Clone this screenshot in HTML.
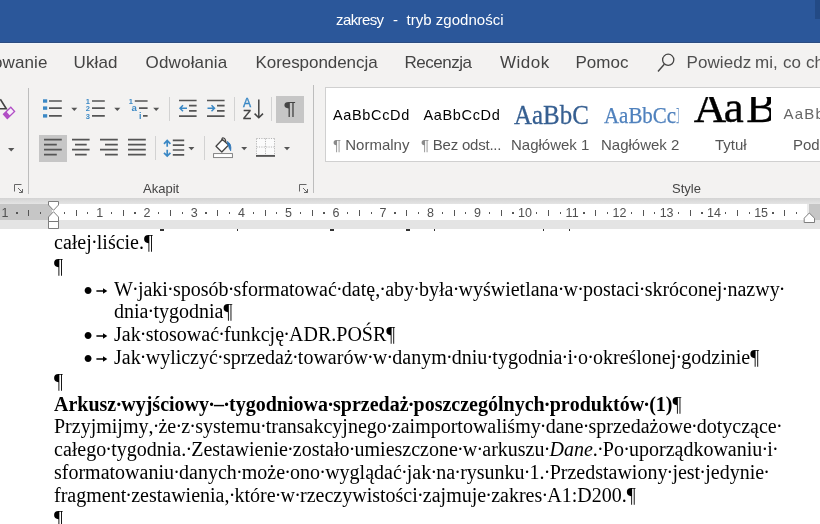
<!DOCTYPE html>
<html lang="pl">
<head>
<meta charset="utf-8">
<title>zakresy - tryb zgodności</title>
<style>
html,body{margin:0;padding:0;}
body{width:820px;height:524px;overflow:hidden;position:relative;background:#fff;font-family:"Liberation Sans",sans-serif;}
#wrap{position:absolute;left:0;top:0;width:820px;height:524px;overflow:hidden;will-change:transform;}
.abs{position:absolute;white-space:nowrap;}
svg.abs{overflow:visible}
#title{left:0;top:0;width:820px;height:42px;background:#2b579a;border-bottom:1px solid #2c4c80;}
#title .t{color:#fff;font-size:15px;top:10.6px;line-height:18px;}
#ribbon{left:0;top:43px;width:820px;height:155px;background:#f3f2f1;border-top:1px solid #f1f6fc;box-sizing:border-box}
.tab{color:#444;font-size:17px;line-height:20px;top:53px;}
#band{left:0;top:198px;width:820px;height:31px;background:linear-gradient(#d3d3d3,#e4e4e4 6px);}
#ruler{left:0;top:204px;width:820px;height:16px;background:#fff;}
.rdark{top:204px;height:16px;background:#c6c6c6;}
.rn{font-size:12.5px;color:#505050;top:206px;line-height:14px;transform:translateX(-50%);}
.doc{font-family:"Liberation Serif",serif;font-size:20px;line-height:23px;color:#000;font-kerning:none;}
.doc s{text-decoration:none;margin:0 var(--m);}
.doc b{font-weight:inherit;}
.bul{font-family:"Liberation Serif",serif;font-size:29px;line-height:30px;color:#000;}
.grp{font-size:13px;color:#444;line-height:16px;top:181px;}
.sname{font-size:15px;color:#555;line-height:18px;top:136px;}
.sprev{font-size:14.5px;color:#000;line-height:18px;top:106px;letter-spacing:0.65px}
.pil{color:#8a8a8a}
.vsep{width:1px;background:#c8c8c8;}
</style>
</head>
<body>
<div id="wrap">
<div id="title" class="abs"><div class="abs t" style="left:336px;letter-spacing:-0.6px">zakresy</div><div class="abs t" style="left:393px">-</div><div class="abs t" style="left:406.5px;letter-spacing:0.03px">tryb zgodności</div></div>
<div class="abs" style="left:815px;top:0;width:5px;height:19px;background:#234a85"></div>
<div id="ribbon" class="abs"></div>
<div class="abs tab" style="left:-7px;letter-spacing:0.1px">owanie</div>
<div class="abs tab" style="left:73.5px;letter-spacing:0.12px">Układ</div>
<div class="abs tab" style="left:145.5px;letter-spacing:0.18px">Odwołania</div>
<div class="abs tab" style="left:255.5px;letter-spacing:-0.06px">Korespondencja</div>
<div class="abs tab" style="left:404.5px;letter-spacing:-0.5px">Recenzja</div>
<div class="abs tab" style="left:500px;letter-spacing:0.5px">Widok</div>
<div class="abs tab" style="left:575.5px;letter-spacing:0px">Pomoc</div>
<svg class="abs" style="left:655px;top:50px" width="24" height="24" viewBox="0 0 24 24"><circle cx="13.2" cy="9.8" r="5.6" fill="none" stroke="#444" stroke-width="1.3"/><path d="M9.3 14.2L3 21.5" stroke="#444" stroke-width="1.4" fill="none"/></svg>
<div class="abs tab" style="left:686.5px;width:140px;height:20px;color:#505050"><span class="abs" style="left:0;letter-spacing:0.1px">Powiedz</span> <span class="abs" style="left:68.5px">mi,</span> <span class="abs" style="left:96.5px">co</span> <span class="abs" style="left:119.5px">chcesz</span></div>

<div class="abs" style="left:39px;top:135px;width:28px;height:27px;background:#c6c6c6"></div>
<div class="abs" style="left:276px;top:96px;width:28px;height:27px;background:#c6c6c6"></div>
<div class="abs vsep" style="left:28px;top:88px;height:106px;background:#bdbdbd"></div>
<div class="abs vsep" style="left:313px;top:85px;height:108px;background:#bdbdbd"></div>
<div class="abs vsep" style="left:169px;top:97px;height:24px;background:#d2d2d2"></div>
<div class="abs vsep" style="left:234px;top:97px;height:24px;background:#d2d2d2"></div>
<div class="abs vsep" style="left:271px;top:97px;height:24px;background:#d2d2d2"></div>
<div class="abs vsep" style="left:155px;top:136px;height:24px;background:#d2d2d2"></div>
<div class="abs vsep" style="left:204px;top:136px;height:24px;background:#d2d2d2"></div>
<svg class="abs" style="left:0;top:86px" width="330" height="112" viewBox="0 86 330 112">
<!-- clear formatting fragment -->
<path d="M0.3 99.2L6.3 108.8H-1" fill="none" stroke="#444" stroke-width="1.6"/>
<path d="M3.5 114.3L10.8 107.3L14.6 111.5L7.3 118.5Z" fill="#f7eefa" stroke="#b14fc5" stroke-width="1.3"/>
<path d="M3.5 114.3L6.3 111.6L10.1 115.8L7.3 118.5Z" fill="#b14fc5"/>
<!-- dropdown arrows -->
<g fill="#555">
<path d="M8 148H14.4L11.2 151.4Z"/>
<path d="M71.3 107.8H77.3L74.3 111Z"/>
<path d="M114.3 107.8H120.3L117.3 111Z"/>
<path d="M153.2 107.8H159.2L156.2 111Z"/>
<path d="M188.4 147H194.4L191.4 150.2Z"/>
<path d="M241.2 147H247.2L244.2 150.2Z"/>
<path d="M284 147H290L287 150.2Z"/>
</g>
<!-- bullets list -->
<g fill="#3a88c5"><rect x="43" y="99.3" width="4.2" height="3.4"/><rect x="43" y="106.4" width="4.2" height="3.4"/><rect x="43" y="114.2" width="4.2" height="3.4"/></g>
<g stroke="#555" stroke-width="1.7" fill="none">
<path d="M49 101H61.8M49 108.1H61.8M49 115.9H61.8"/>
<!-- numbered -->
<path d="M92 101H104.8M92 108.1H104.8M92 115.9H104.8"/>
<!-- multilevel -->
<path d="M134.8 101H147.6M139 108.1H147.6M143 115.9H147.6"/>
<!-- align left -->
<path d="M44 139.6H61.8M44 144.6H56.8M44 149.7H61.8M44 154.7H56.8"/>
<!-- center -->
<path d="M72 139.6H89.6M75 144.6H86.7M72 149.7H89.6M75 154.7H86.7"/>
<!-- right -->
<path d="M100 139.6H117.8M105 144.6H117.8M100 149.7H117.8M105 154.7H117.8"/>
<!-- justify -->
<path d="M128 139.6H145.8M128 144.6H145.8M128 149.7H145.8M128 154.7H145.8"/>
<!-- line spacing lines -->
<path d="M172.8 140.3H184.2M172.8 145.1H184.2M172.8 150H184.2M172.8 154.8H184.2"/>
<!-- decrease indent -->
<path d="M179 100.5H196.6M189 105.7H196.6M189 110.9H196.6M179 116.1H196.6"/>
<!-- increase indent -->
<path d="M207 100.5H224.6M217 105.7H224.6M217 110.9H224.6M207 116.1H224.6"/>
</g>
<g stroke="#3a88c5" stroke-width="1.5" fill="none">
<path d="M180 108.3H187M183 105.3L180 108.3L183 111.3"/>
<path d="M207.5 108.3H214.5M211.5 105.3L214.5 108.3L211.5 111.3"/>
<path d="M167.2 140.8V146.8M167.2 149.8V155.8M164 143.8L167.2 140.5L170.4 143.8M164 152.8L167.2 156.1L170.4 152.8" stroke-width="1.7"/>
</g>
<g font-family="Liberation Sans, sans-serif" font-weight="bold" fill="#3a88c5" font-size="7.5">
<text x="85.8" y="103.6">1</text><text x="85.8" y="111">2</text><text x="85.8" y="118.6">3</text>
<text x="128.8" y="103.6">1</text><text x="131.6" y="111.4" font-size="9.6">a</text><text x="139" y="119" font-size="9">i</text>
</g>
<!-- AZ sort -->
<text x="243" y="107.4" font-family="Liberation Sans, sans-serif" font-size="12.2" fill="#3a88c5" stroke="#3a88c5" stroke-width="0.35">A</text>
<text x="243" y="118.5" font-family="Liberation Sans, sans-serif" font-size="12.2" fill="#444" stroke="#444" stroke-width="0.35" textLength="8.2" lengthAdjust="spacingAndGlyphs">Z</text>
<path d="M258.8 99.5V117.6M254.6 113.6L258.8 117.8L263 113.6" stroke="#444" stroke-width="1.5" fill="none"/>
<!-- pilcrow -->
<text transform="translate(283.4,114.6) scale(1.38,1.1)" font-family="Liberation Sans, sans-serif" font-size="17" fill="#444">¶</text>
<!-- paint bucket -->
<path d="M216 146.2L222.4 139.5L228.6 145L221.8 152Z" fill="#fff" stroke="#444" stroke-width="1.3" stroke-linejoin="round"/>
<path d="M222.2 141Q221.2 137.4 223.6 138Q225.6 138.6 225.8 142" fill="none" stroke="#444" stroke-width="1.2"/>
<path d="M227.2 141.4Q231.8 143.6 230.7 150.8Q228.9 148.6 228.5 145.2Z" fill="#2e75b6" stroke="#2e75b6" stroke-width="0.8"/>
<circle cx="228.8" cy="144.2" r="1.3" fill="#2e75b6"/>
<rect x="213.6" y="153.6" width="18.8" height="4" fill="#fff" stroke="#777" stroke-width="0.9"/>
<!-- borders -->
<rect x="256" y="138" width="19" height="17" fill="#fbfbfb"/>
<g stroke="#b5b5b5" stroke-width="1" stroke-dasharray="1.2 1.2" fill="none">
<path d="M256.5 138.5H274.5M256.5 138.5V155M274.5 138.5V155M265.5 138.5V155M256.5 147H274.5"/>
</g>
<path d="M256 155.9H275" stroke="#555" stroke-width="1.9"/>
<!-- dialog launchers -->
<g stroke="#666" stroke-width="1" fill="none">
<path d="M14.5 191.5V184.5H21.5M18 188L22.5 192.5M22.5 189V192.5H19"/>
<path d="M299.5 191.5V184.5H306.5M303 188L307.5 192.5M307.5 189V192.5H304"/>
</g>
</svg>


<div class="abs grp" style="left:143px">Akapit</div>
<div class="abs grp" style="left:672px">Style</div>

<div id="gallery" class="abs" style="left:325px;top:87px;width:500px;height:75px;background:#fff;border:1px solid #d0d0d0;box-sizing:border-box;"></div>
<div class="abs sprev" style="left:333px">AaBbCcDd</div>
<div class="abs sname" style="left:333px"><span class="pil">¶</span> Normalny</div>
<div class="abs sprev" style="left:423.5px">AaBbCcDd</div>
<div class="abs sname" style="left:421px;letter-spacing:-0.22px"><span class="pil">¶</span> Bez odst...</div>
<div class="abs" style="left:514px;top:98px;font-family:'Liberation Serif',serif;font-size:28px;line-height:34px;color:#365f91;transform:scaleX(0.89);transform-origin:0 0;-webkit-text-stroke:0.3px #365f91">AaBbC</div>
<div class="abs sname" style="left:511px">Nagłówek 1</div>
<div class="abs" style="left:603.5px;top:100.5px;width:81.5px;overflow:hidden;font-family:'Liberation Serif',serif;font-size:23px;line-height:30px;color:#4f81bd;transform:scaleX(0.91);transform-origin:0 0;-webkit-text-stroke:0.25px #4f81bd">AaBbCcDd</div>
<div class="abs sname" style="left:601px">Nagłówek 2</div>
<div class="abs" style="left:690px;top:97px;width:81px;height:32px;overflow:hidden"><div class="abs" style="left:3.7px;top:-16px;font-family:'Liberation Serif',serif;font-size:45px;line-height:52px;color:#000;-webkit-text-stroke:0.4px #000"><span style="letter-spacing:-2.5px">A</span><span style="letter-spacing:2.5px">a</span>B</div></div>
<div class="abs sname" style="left:715px">Tytuł</div>
<div class="abs" style="left:783.5px;top:105px;font-size:15px;line-height:18px;color:#666;letter-spacing:1.2px">AaBbCcD</div>
<div class="abs sname" style="left:793px">Podtytuł</div>

<div id="band" class="abs"></div>
<div id="ruler" class="abs"></div>
<div class="abs rdark" style="left:0;width:52px"></div>
<div class="abs rdark" style="left:809px;width:11px"></div><div class="abs" style="left:807px;top:204px;width:2px;height:16px;background:#ebebeb"></div>
<div class="abs rn" style="left:5.1px">1</div><div class="abs" style="left:16.3px;top:212px;width:1.4px;height:2px;background:#555"></div><div class="abs" style="left:28.3px;top:210px;width:1px;height:6px;background:#555"></div><div class="abs" style="left:39.9px;top:212px;width:1.4px;height:2px;background:#555"></div><div class="abs" style="left:63.5px;top:212px;width:1.4px;height:2px;background:#555"></div><div class="abs" style="left:75.5px;top:210px;width:1px;height:6px;background:#555"></div><div class="abs" style="left:87.1px;top:212px;width:1.4px;height:2px;background:#555"></div><div class="abs rn" style="left:99.7px">1</div><div class="abs" style="left:110.8px;top:212px;width:1.4px;height:2px;background:#555"></div><div class="abs" style="left:122.8px;top:210px;width:1px;height:6px;background:#555"></div><div class="abs" style="left:134.4px;top:212px;width:1.4px;height:2px;background:#555"></div><div class="abs rn" style="left:146.9px">2</div><div class="abs" style="left:158.0px;top:212px;width:1.4px;height:2px;background:#555"></div><div class="abs" style="left:170.0px;top:210px;width:1px;height:6px;background:#555"></div><div class="abs" style="left:181.6px;top:212px;width:1.4px;height:2px;background:#555"></div><div class="abs rn" style="left:194.2px">3</div><div class="abs" style="left:205.3px;top:212px;width:1.4px;height:2px;background:#555"></div><div class="abs" style="left:217.3px;top:210px;width:1px;height:6px;background:#555"></div><div class="abs" style="left:228.9px;top:212px;width:1.4px;height:2px;background:#555"></div><div class="abs rn" style="left:241.4px">4</div><div class="abs" style="left:252.5px;top:212px;width:1.4px;height:2px;background:#555"></div><div class="abs" style="left:264.5px;top:210px;width:1px;height:6px;background:#555"></div><div class="abs" style="left:276.1px;top:212px;width:1.4px;height:2px;background:#555"></div><div class="abs rn" style="left:288.6px">5</div><div class="abs" style="left:299.8px;top:212px;width:1.4px;height:2px;background:#555"></div><div class="abs" style="left:311.8px;top:210px;width:1px;height:6px;background:#555"></div><div class="abs" style="left:323.4px;top:212px;width:1.4px;height:2px;background:#555"></div><div class="abs rn" style="left:335.9px">6</div><div class="abs" style="left:347.0px;top:212px;width:1.4px;height:2px;background:#555"></div><div class="abs" style="left:359.0px;top:210px;width:1px;height:6px;background:#555"></div><div class="abs" style="left:370.6px;top:212px;width:1.4px;height:2px;background:#555"></div><div class="abs rn" style="left:383.1px">7</div><div class="abs" style="left:394.3px;top:212px;width:1.4px;height:2px;background:#555"></div><div class="abs" style="left:406.3px;top:210px;width:1px;height:6px;background:#555"></div><div class="abs" style="left:417.9px;top:212px;width:1.4px;height:2px;background:#555"></div><div class="abs rn" style="left:430.4px">8</div><div class="abs" style="left:441.5px;top:212px;width:1.4px;height:2px;background:#555"></div><div class="abs" style="left:453.5px;top:210px;width:1px;height:6px;background:#555"></div><div class="abs" style="left:465.1px;top:212px;width:1.4px;height:2px;background:#555"></div><div class="abs rn" style="left:477.6px">9</div><div class="abs" style="left:488.8px;top:212px;width:1.4px;height:2px;background:#555"></div><div class="abs" style="left:500.8px;top:210px;width:1px;height:6px;background:#555"></div><div class="abs" style="left:512.4px;top:212px;width:1.4px;height:2px;background:#555"></div><div class="abs rn" style="left:524.9px">10</div><div class="abs" style="left:536.0px;top:212px;width:1.4px;height:2px;background:#555"></div><div class="abs" style="left:548.0px;top:210px;width:1px;height:6px;background:#555"></div><div class="abs" style="left:559.6px;top:212px;width:1.4px;height:2px;background:#555"></div><div class="abs rn" style="left:572.1px">11</div><div class="abs" style="left:583.3px;top:212px;width:1.4px;height:2px;background:#555"></div><div class="abs" style="left:595.3px;top:210px;width:1px;height:6px;background:#555"></div><div class="abs" style="left:606.9px;top:212px;width:1.4px;height:2px;background:#555"></div><div class="abs rn" style="left:619.4px">12</div><div class="abs" style="left:630.5px;top:212px;width:1.4px;height:2px;background:#555"></div><div class="abs" style="left:642.5px;top:210px;width:1px;height:6px;background:#555"></div><div class="abs" style="left:654.1px;top:212px;width:1.4px;height:2px;background:#555"></div><div class="abs rn" style="left:666.6px">13</div><div class="abs" style="left:677.8px;top:212px;width:1.4px;height:2px;background:#555"></div><div class="abs" style="left:689.8px;top:210px;width:1px;height:6px;background:#555"></div><div class="abs" style="left:701.4px;top:212px;width:1.4px;height:2px;background:#555"></div><div class="abs rn" style="left:713.9px">14</div><div class="abs" style="left:725.0px;top:212px;width:1.4px;height:2px;background:#555"></div><div class="abs" style="left:737.0px;top:210px;width:1px;height:6px;background:#555"></div><div class="abs" style="left:748.6px;top:212px;width:1.4px;height:2px;background:#555"></div><div class="abs rn" style="left:761.1px">15</div><div class="abs" style="left:772.3px;top:212px;width:1.4px;height:2px;background:#555"></div><div class="abs" style="left:784.3px;top:210px;width:1px;height:6px;background:#555"></div><div class="abs" style="left:795.9px;top:212px;width:1.4px;height:2px;background:#555"></div>

<svg class="abs" style="left:0;top:198px" width="820" height="32" viewBox="0 198 820 32">
<g fill="#fff" stroke="#707070" stroke-width="0.9">
<path d="M48.5 201.5H58.5V205L53.5 210.3L48.5 205Z"/>
<path d="M53.5 211.7L58.5 217V221.5H48.5V217Z"/>
<path d="M48.5 221.5H58.5V228.5H48.5Z"/>
<path d="M809.3 213L814.5 218.2V222.5H804.2V218.2Z"/>
</g></svg>
<div class="abs doc" style="left:54px;top:231px;--m:-0.83px">całej<s>·</s>liście.¶</div>
<div class="abs doc" style="left:54px;top:255px;--m:-0.83px">¶</div>
<div class="abs doc" style="left:114px;top:278px;--m:-0.83px">W<s>·</s>jaki<s>·</s>sposób<s>·</s>sformatować<s>·</s>datę,<s>·</s>aby<s>·</s>była<s>·</s>wyświetlana<s>·</s>w<s>·</s>postaci<s>·</s>skróconej<s>·</s>nazwy<s>·</s></div>
<div class="abs doc" style="left:114px;top:300px;--m:-0.83px">dnia<s>·</s>tygodnia¶</div>
<div class="abs doc" style="left:114px;top:323px;--m:-0.83px">Jak<s>·</s>stosować<s>·</s>funkcję<s>·</s>ADR.POŚR¶</div>
<div class="abs doc" style="left:114px;top:346px;--m:-0.83px">Jak<s>·</s>wyliczyć<s>·</s>sprzedaż<s>·</s>towarów<s>·</s>w<s>·</s>danym<s>·</s>dniu<s>·</s>tygodnia<s>·</s>i<s>·</s>o<s>·</s>określonej<s>·</s>godzinie¶</div>
<div class="abs doc" style="left:54px;top:370px;--m:-0.83px">¶</div>
<div class="abs doc" style="left:54px;top:393px;font-weight:bold;--m:-0.83px">Arkusz<s>·</s>wyjściowy<s>·</s>–<s>·</s>tygodniowa<s>·</s>sprzedaż<s>·</s>poszczególnych<s>·</s>produktów<s>·</s>(1)<span style="font-weight:normal">¶</span></div>
<div class="abs doc" style="left:54px;top:415px;--m:-0.83px">Przyjmijmy,<s>·</s>że<s>·</s>z<s>·</s>systemu<s>·</s>transakcyjnego<s>·</s>zaimportowaliśmy<s>·</s>dane<s>·</s>sprzedażowe<s>·</s>dotyczące<s>·</s></div>
<div class="abs doc" style="left:54px;top:438px;--m:-0.83px">całego<s>·</s>tygodnia.<s>·</s>Zestawienie<s>·</s>zostało<s>·</s>umieszczone<s>·</s>w<s>·</s>arkuszu<s>·</s><i>Dane</i>.<s>·</s>Po<s>·</s>uporządkowaniu<s>·</s>i<s>·</s></div>
<div class="abs doc" style="left:54px;top:461px;--m:-0.83px">sformatowaniu<s>·</s>danych<s>·</s>może<s>·</s>ono<s>·</s>wyglądać<s>·</s>jak<s>·</s>na<s>·</s>rysunku<s>·</s>1.<s>·</s>Przedstawiony<s>·</s>jest<s>·</s>jedynie<s>·</s></div>
<div class="abs doc" style="left:54px;top:484px;--m:-0.83px">fragment<s>·</s>zestawienia,<s>·</s>które<s>·</s>w<s>·</s>rzeczywistości<s>·</s>zajmuje<s>·</s>zakres<s>·</s>A1:D200.¶</div>
<div class="abs doc" style="left:54px;top:507px;--m:-0.83px">¶</div>
<div class="abs bul" style="left:83px;top:276px">•</div>
<svg class="abs" style="left:97px;top:287px" width="10" height="8" viewBox="0 0 10 8"><path d="M-0.6 4H9" fill="none" stroke="#000" stroke-width="1.5"/><path d="M6 1.2L10.3 4L6 6.8Z" fill="#000"/></svg>
<div class="abs bul" style="left:83px;top:321px">•</div>
<svg class="abs" style="left:97px;top:332px" width="10" height="8" viewBox="0 0 10 8"><path d="M-0.6 4H9" fill="none" stroke="#000" stroke-width="1.5"/><path d="M6 1.2L10.3 4L6 6.8Z" fill="#000"/></svg>
<div class="abs bul" style="left:83px;top:344px">•</div>
<svg class="abs" style="left:97px;top:355px" width="10" height="8" viewBox="0 0 10 8"><path d="M-0.6 4H9" fill="none" stroke="#000" stroke-width="1.5"/><path d="M6 1.2L10.3 4L6 6.8Z" fill="#000"/></svg>
<div class="abs" style="left:160.0px;top:229px;width:4.0px;height:1.5px;background:#333"></div><div class="abs" style="left:236.5px;top:229px;width:1.6px;height:1.5px;background:#333"></div><div class="abs" style="left:330.0px;top:229px;width:4.0px;height:1.5px;background:#333"></div><div class="abs" style="left:406.0px;top:229px;width:4.0px;height:1.5px;background:#333"></div><div class="abs" style="left:433.5px;top:229px;width:1.6px;height:1.5px;background:#333"></div><div class="abs" style="left:542.5px;top:229px;width:1.6px;height:1.5px;background:#333"></div><div class="abs" style="left:568.5px;top:229px;width:1.6px;height:1.5px;background:#333"></div>

</div>
</body>
</html>
